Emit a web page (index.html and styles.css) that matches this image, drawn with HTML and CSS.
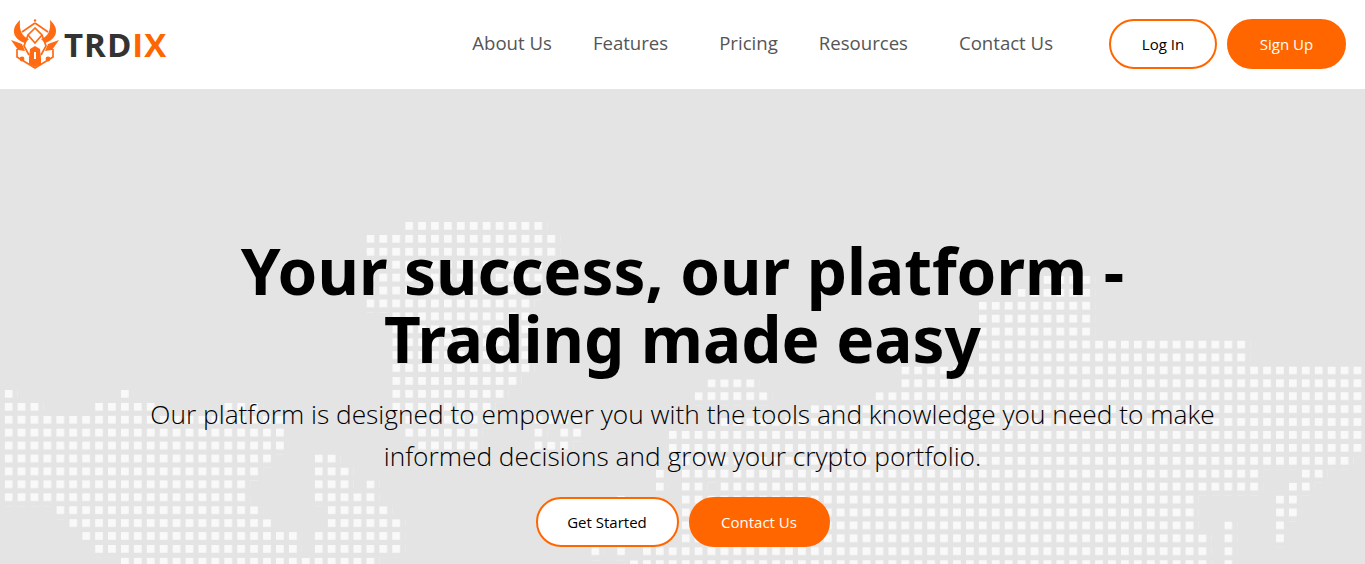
FILE: index.html
```html
<!DOCTYPE html>
<html lang="en">
<head>
    <meta charset="UTF-8">
    <meta name="viewport" content="width=device-width, initial-scale=1.0">
    <title>TRDIX</title>
    <link rel="stylesheet" href="styles.css">
</head>
<body>
    <header class="topbar">
        <a class="logo" href="#">
            <svg class="logo-mark" viewBox="0 0 50 50" width="50" height="50">
                <g fill="#ff6a13">
                    <path d="M10 1C0 10 3 20 15 24L19 20C12 18 9 11 10 1Z"/>
                    <path d="M40 1C50 10 47 20 35 24L31 20C38 18 41 11 40 1Z"/>
                    <path d="M1 21L12 25L15 32L8 31Z"/>
                    <path d="M49 21L38 25L35 32L42 31Z"/>
                    <path d="M20 30L25 27L30 30L31 39V45L25 48L19 45V39Z"/>
                    <circle cx="25" cy="1.5" r="1.2"/>
                    <circle cx="12" cy="40" r="2.4"/>
                    <circle cx="38" cy="40" r="2.4"/>
                </g>
                <g fill="none" stroke="#ff6a13" stroke-width="1.7">
                    <path d="M25 4L38 13M25 4L12 13"/>
                    <path d="M7 30V38L25 49L43 38V30"/>
                    <path d="M25 9L18 16L25 24L32 16Z"/>
                    <path d="M18 16L14 27L19 36M32 16L36 27L31 36"/>
                </g>
                <path d="M25 33V40" stroke="#ffffff" stroke-width="2"/>
            </svg>
            <span class="logo-text">TRD<span class="logo-accent">IX</span></span>
        </a>
        <nav class="menu">
            <a href="#">About Us</a>
            <a class="wide" href="#">Features</a>
            <a href="#">Pricing</a>
            <a class="wide" href="#">Resources</a>
            <a href="#">Contact Us</a>
        </nav>
        <div class="actions">
            <a class="btn btn-line login" href="#">Log In</a>
            <a class="btn btn-fill signup" href="#">Sign Up</a>
        </div>
    </header>

    <main class="hero">
        <svg class="world" viewBox="0 89 1365 475" width="1365" height="475">
            <defs>
                <pattern id="dot" width="1" height="1" patternUnits="userSpaceOnUse">
                    <rect width="0.6" height="0.6" fill="#f9f9f9"/>
                </pattern>
            </defs>
            <!-- west part of the map, one run per row: column, row, length -->
            <g transform="translate(4.7 222) scale(12.92)" fill="url(#dot)">
                <path d="M31 0h11v1h-11z
                    M28 1h15v1h-15z M28 2h15v1h-15z M28 3h14v1h-14z M28 4h14v1h-14z M28 5h14v1h-14z
                    M28 6h13v1h-13z M30 7h11v1h-11z M30 8h11v1h-11z M30 9h11v1h-11z M30 10h11v1h-11z M30 11h11v1h-11z
                    M30 12h10v1h-10z
                    M0 13h1v1h-1z M9 13h1v1h-1z M30 13h9v1h-9z
                    M0 14h3v1h-3z M7 14h5v1h-5z M17 14h3v1h-3z M30 14h8v1h-8z
                    M0 15h22v1h-22z M31 15h7v1h-7z M41 15h4v1h-4z
                    M0 16h22v1h-22z M31 16h6v1h-6z M41 16h1v1h-1z M43 16h2v1h-2z
                    M0 17h22v1h-22z M32 17h5v1h-5z M41 17h3v1h-3z
                    M0 18h21v1h-21z M24 18h2v1h-2z
                    M0 19h20v1h-20z M24 19h3v1h-3z
                    M0 20h19v1h-19z M24 20h3v1h-3z M28 20h1v1h-1z
                    M0 21h19v1h-19z M24 21h5v1h-5z
                    M4 22h16v1h-16z M25 22h5v1h-5z
                    M5 23h16v1h-16z M25 23h6v1h-6z
                    M6 24h17v1h-17z M24 24h7v1h-7z
                    M7 25h16v1h-16z M24 25h7v1h-7z
                    M9 26h20v1h-20z"/>
            </g>
            <!-- east part sits a few px off the west grid -->
            <g transform="translate(9.9 224.3) scale(12.92)" fill="url(#dot)">
                <path d="M80 4h4v1h-4z M78 5h6v1h-6z M75 6h9v1h-9z M75 7h9v1h-9z M75 8h9v1h-9z
                    M75 9h21v1h-21z M75 10h21v1h-21z
                    M69 11h36v1h-36z
                    M54 12h4v1h-4z M69 12h36v1h-36z
                    M53 13h6v1h-6z M67 13h38v1h-38z
                    M62 14h43v1h-43z M55 15h50v1h-50z
                    M51 16h54v1h-54z M51 17h54v1h-54z
                    M51 18h53v1h-53z
                    M50 19h1v1h-1z M52 19h45v1h-45z M100 19h2v1h-2z
                    M50 20h1v1h-1z M52 20h2v1h-2z M55 20h42v1h-42z M99 20h2v1h-2z
                    M47 21h1v1h-1z M52 21h40v1h-40z M98 21h2v1h-2z
                    M52 22h40v1h-40z M98 22h2v1h-2z
                    M52 23h40v1h-40z M94 23h1v1h-1z M98 23h1v1h-1z
                    M52 24h41v1h-41z M94 24h1v1h-1z M98 24h1v1h-1z
                    M45 25h1v1h-1z M47 25h1v1h-1z M49 25h44v1h-44z M94 25h1v1h-1z
                    M48 26h45v1h-45z M94 26h1v1h-1z"/>
            </g>
        </svg>
        <div class="hero-inner">
            <h1>Your success, our platform - Trading made easy</h1>
            <p>Our platform is designed to empower you with the tools and knowledge you need to make informed decisions and grow your crypto portfolio.</p>
            <div class="hero-btns">
                <a class="btn btn-line started" href="#">Get Started</a>
                <a class="btn btn-fill contact" href="#">Contact Us</a>
            </div>
        </div>
    </main>
</body>
</html>
```

FILE: styles.css
```css
* {
    box-sizing: border-box;
}

html, body {
    height: 100%;
}

body {
    margin: 0;
    display: flex;
    flex-direction: column;
    overflow: hidden;
    background-color: #e4e4e4;
    font-family: "Open Sans", "Noto Sans", sans-serif;
}

a {
    text-decoration: none;
}

.topbar {
    display: flex;
    align-items: center;
    height: 89px;
    padding: 0 19px 1px 10px;
    background-color: #ffffff;
}

.logo {
    display: flex;
    align-items: center;
    gap: 4px;
}

.logo-text {
    font-size: 33px;
    font-weight: 700;
    letter-spacing: 1px;
    color: #333333;
}

.logo-accent {
    color: #ff6600;
}

.menu {
    display: flex;
    gap: 41px;
    margin-left: auto;
    margin-right: 56px;
    margin-bottom: 3px;
}

.menu a {
    font-size: 18.6px;
    color: #555555;
}

.menu a.wide {
    margin-right: 10px;
}

.actions {
    display: flex;
    gap: 10px;
}

.btn {
    display: flex;
    align-items: center;
    justify-content: center;
    height: 50px;
    border-radius: 25px;
    border: 2px solid #ff6600;
    font-size: 15px;
}

.btn-line {
    background-color: #ffffff;
    color: #000000;
}

.btn-fill {
    background-color: #ff6600;
    color: #ffffff;
}

.login {
    width: 108px;
}

.signup {
    width: 119px;
}

.started {
    width: 143px;
}

.contact {
    width: 141px;
}

.hero {
    position: relative;
    flex: 1;
}

.world {
    position: absolute;
    top: 0;
    left: 0;
}

.hero-inner {
    position: relative;
    display: flex;
    flex-direction: column;
    align-items: center;
    padding-top: 148px;
    text-align: center;
}

h1 {
    width: 960px;
    margin: 0;
    font-family: "Noto Sans", sans-serif;
    font-size: 63.8px;
    font-weight: 700;
    line-height: 68px;
    color: #000000;
}

.hero-inner p {
    width: 1100px;
    margin: 20px 0 0;
    font-size: 26.3px;
    font-weight: 300;
    line-height: 42px;
    color: #000000;
}

.hero-btns {
    display: flex;
    gap: 10px;
    margin-top: 20px;
}
```
